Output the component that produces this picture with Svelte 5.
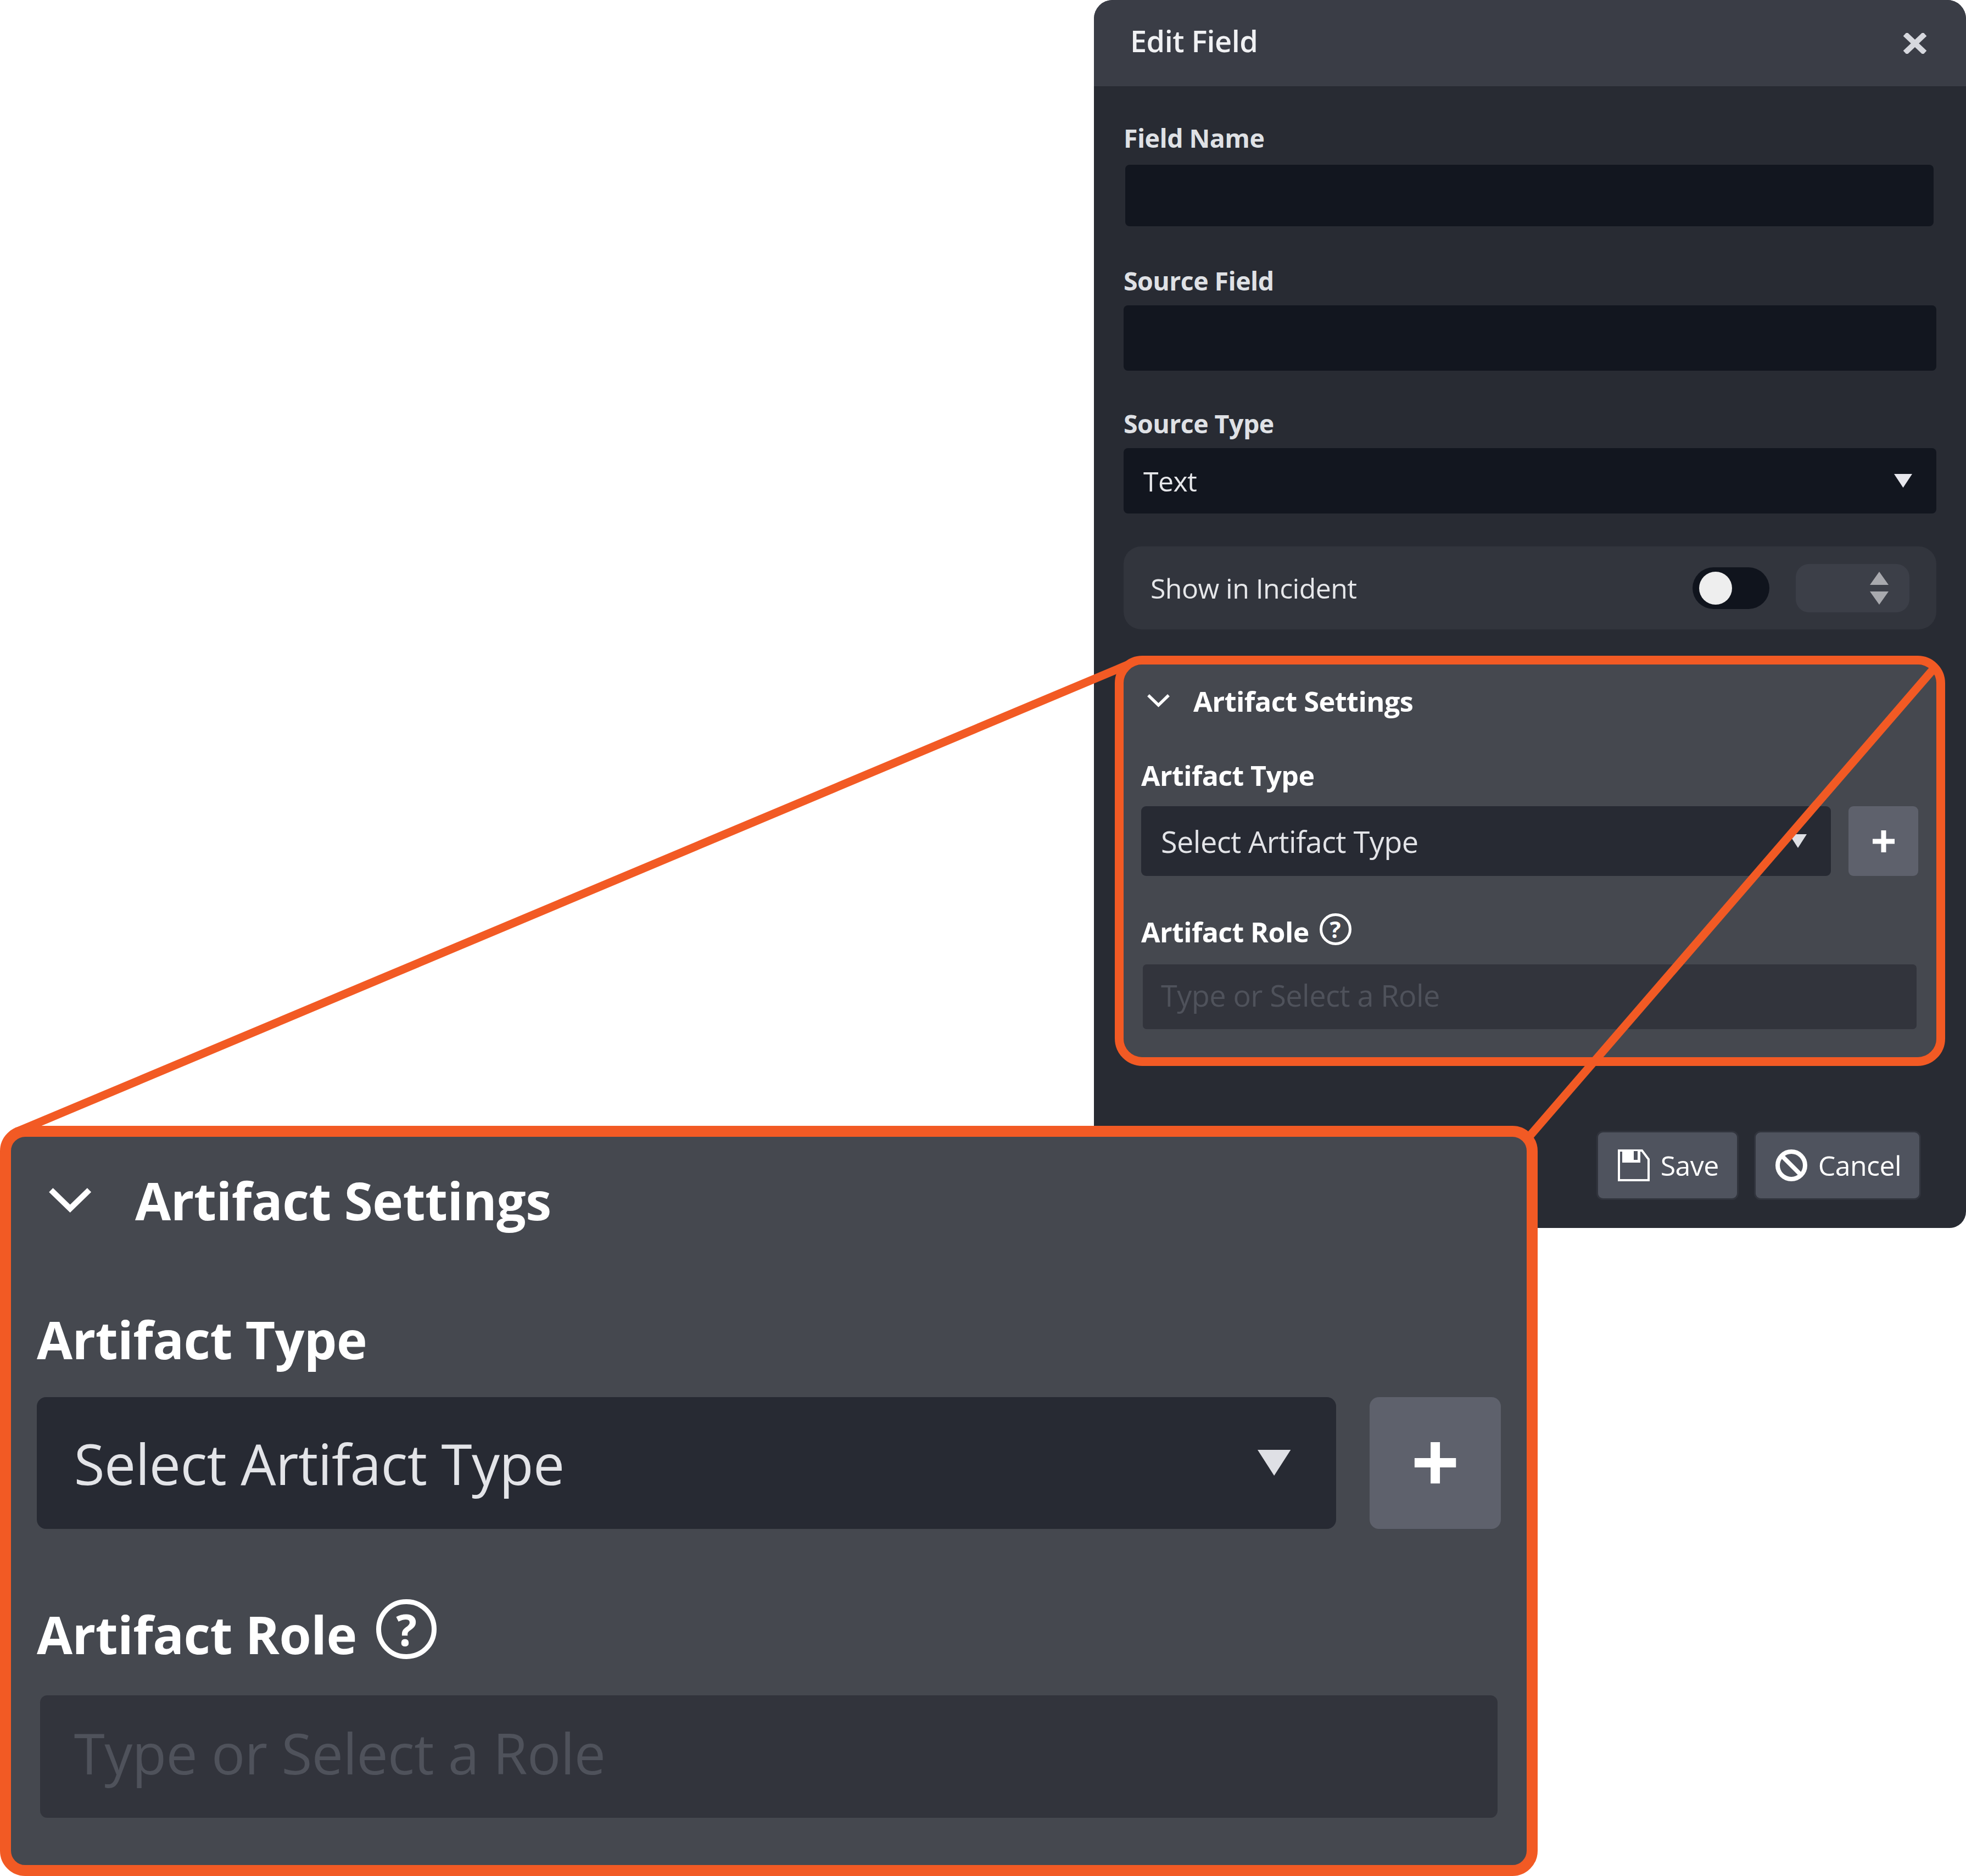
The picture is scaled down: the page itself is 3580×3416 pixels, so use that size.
<script>
  const fields = [
    { label: "Field Name", inset: true },
    { label: "Source Field", inset: false },
  ];
</script>

{#snippet artifact(cls)}
  <section class="artifact {cls}">
    <div class="artifact-head">
      <svg class="chevron" viewBox="0 0 41 24" fill="none" stroke="currentColor" stroke-width="5.5" stroke-linecap="square">
        <path d="M4 4 L20.5 20 L37 4" />
      </svg>
      <span>Artifact Settings</span>
    </div>
    <div class="a-label first">Artifact Type</div>
    <div class="type-row">
      <div class="a-select">
        <span>Select Artifact Type</span>
        <svg class="a-caret" viewBox="0 0 32 25"><path d="M0 0 H32 L16 25 Z" fill="#dfe0e5" /></svg>
      </div>
      <button class="plus" aria-label="Add">
        <svg viewBox="0 0 42 42"><path d="M21 1 V41 M1 21 H41" stroke="#fff" stroke-width="9" fill="none" /></svg>
      </button>
    </div>
    <div class="a-label second">Artifact Role <span class="help">?</span></div>
    <input class="a-input" placeholder="Type or Select a Role" />
  </section>
{/snippet}

<div class="page">
  <div class="panel">
    <header class="head">
      <span>Edit Field</span>
      <svg class="close" viewBox="0 0 42 38" fill="none" stroke="#d6d8de" stroke-width="10">
        <path d="M3 2 L39 36 M39 2 L3 36" />
      </svg>
    </header>

    <div class="body">
      {#each fields as f}
        <div class="field">
          <div class="label">{f.label}</div>
          <input class="control" class:inset={f.inset} />
        </div>
      {/each}

      <div class="field last">
        <div class="label">Source Type</div>
        <div class="control select">
          <span>Text</span>
          <svg class="caret" viewBox="0 0 33 25"><path d="M0 0 H33 L16.5 25 Z" fill="#e8e8ee" /></svg>
        </div>
      </div>

      <div class="incident">
        <span>Show in Incident</span>
        <div class="toggle"><i></i></div>
        <div class="stepper">
          <svg viewBox="0 0 34 60" width="34" height="60">
            <path d="M17 0 L34 24 H0 Z M17 60 L34 36 H0 Z" fill="#a8a9ae" />
          </svg>
        </div>
      </div>

      {@render artifact("small")}

      <div class="actions">
        <button class="btn">
          <svg viewBox="0 0 58 58" fill="none" stroke="#fff" stroke-width="4">
            <path d="M2 2 H44 L56 18 V56 H2 Z" />
            <path d="M8 2 H41 V24 H8 Z" fill="#fff" stroke="none" />
            <path d="M29 3 H36 V19 H29 Z" fill="#4f535e" stroke="none" />
          </svg>
          Save
        </button>
        <button class="btn">
          <svg viewBox="0 0 58 58" fill="none" stroke="#fff" stroke-width="8">
            <circle cx="29" cy="29" r="25" />
            <path d="M12 12 L46 46" />
          </svg>
          Cancel
        </button>
      </div>
    </div>
  </div>

  <svg class="connectors" viewBox="0 0 3580 3416" fill="none" stroke="#f25a24" stroke-width="15">
    <path d="M2055 1210 L30 2061" />
    <path d="M3520 1219 L2786 2068" />
  </svg>

  {@render artifact("large")}
</div>

<style>
  :global(body) {
    background: #fff;
  }
  * {
    box-sizing: border-box;
  }
  .page {
    position: relative;
    width: 3580px;
    height: 3416px;
    display: flex;
    justify-content: flex-end;
    align-items: flex-start;
    overflow: hidden;
    font-family: "Open Sans", "Noto Sans", sans-serif;
    letter-spacing: -0.035em;
    color: #e6e7ea;
  }
  .panel {
    width: 1588px;
    height: 2236px;
    background: #282b33;
    border-radius: 34px 34px 30px 30px;
    overflow: hidden;
  }
  .head {
    height: 157px;
    background: #3a3d46;
    padding: 0 72px 10px 66px;
    display: flex;
    align-items: center;
    justify-content: space-between;
    font-size: 54px;
    font-weight: 600;
    color: #f0f1f3;
  }
  .close {
    width: 42px;
    height: 38px;
    margin-top: 11px;
  }
  .body {
    padding: 64px 54px 0;
  }
  .field {
    display: flex;
    flex-direction: column;
    margin-bottom: 66px;
  }
  .field.last {
    margin-bottom: 60px;
  }
  .label {
    font-size: 46.5px;
    line-height: 60px;
    font-weight: 700;
    color: #dfe1e5;
    margin-bottom: 15px;
  }
  .control {
    display: block;
    width: 100%;
    height: 119px;
    background: #12161f;
    border: none;
    border-radius: 8px;
  }
  .inset {
    width: auto;
    height: 112px;
    margin: 4px 5px 3px 3px;
  }
  .select {
    display: flex;
    align-items: center;
    justify-content: space-between;
    padding: 0 44px 0 36px;
    font-size: 50px;
    color: #e6e7ea;
  }
  .caret {
    width: 33px;
    height: 25px;
  }
  .incident {
    height: 151px;
    background: #32353d;
    border-radius: 32px;
    padding: 0 49px;
    display: flex;
    align-items: center;
    font-size: 50px;
    color: #e6e7ea;
  }
  .incident > span {
    flex: 1;
  }
  .toggle {
    width: 140px;
    height: 76px;
    border-radius: 38px;
    background: #10141d;
    padding: 8px 12px;
    margin-right: 48px;
  }
  .toggle i {
    display: block;
    width: 60px;
    height: 60px;
    border-radius: 50%;
    background: #eeeeee;
  }
  .stepper {
    width: 207px;
    height: 88px;
    border-radius: 24px;
    background: #3c3f48;
    display: flex;
    align-items: center;
    justify-content: flex-end;
    padding-right: 38px;
  }

  /* shared by the section in the form and its enlarged copy */
  .artifact {
    background: #45484f;
    color: #fff;
    padding: var(--pt) var(--pr) var(--pb) var(--pl);
  }
  .small {
    --k: 1;
    --pt: 36px;
    --pr: 33px;
    --pb: 51px;
    --pl: 32px;
    --chev: 11px;
    --head: 50.5px;
    --fix: -1px;
    margin-top: 64px;
    border-radius: 34px;
    outline: 16px solid #f25a24;
    position: relative;
  }
  .large {
    --k: 1.885;
    --pt: 59px;
    --pr: 47px;
    --pb: 0px;
    --pl: 47px;
    --chev: 22px;
    --head: 94.5px;
    --fix: -5px;
    position: absolute;
    left: 0;
    top: 2050px;
    width: 2800px;
    height: 1366px;
    border: 20px solid #f25a24;
    border-radius: 46px;
  }
  .artifact-head {
    display: flex;
    align-items: center;
    height: calc(60px * var(--k));
    font-size: var(--head);
    font-weight: 700;
  }
  .chevron {
    width: calc(41px * var(--k));
    height: calc(24px * var(--k));
    margin-left: var(--chev);
    margin-right: calc(95px * var(--k) - 41px * var(--k) - var(--chev));
  }
  .a-label {
    font-size: calc(50px * var(--k));
    line-height: calc(60px * var(--k));
    font-weight: 700;
    display: flex;
    align-items: center;
  }
  .first {
    margin-top: calc(77px * var(--k) + var(--fix));
    margin-bottom: calc(26px * var(--k));
  }
  .second {
    margin-top: calc(72px * var(--k));
    margin-bottom: calc(29px * var(--k));
  }
  .type-row {
    display: flex;
    gap: calc(32px * var(--k));
    height: calc(127px * var(--k));
  }
  .a-select {
    flex: 1;
    display: flex;
    align-items: center;
    justify-content: space-between;
    background: #272a33;
    border-radius: calc(9px * var(--k));
    padding: 0 calc(44px * var(--k)) 0 calc(36px * var(--k));
    font-size: calc(54px * var(--k));
    color: #e3e4e8;
  }
  .a-caret {
    width: calc(32px * var(--k));
    height: calc(25px * var(--k));
  }
  .plus {
    width: calc(127px * var(--k));
    background: #5e616c;
    border: none;
    border-radius: calc(9px * var(--k));
    padding: 0;
    display: flex;
    align-items: center;
    justify-content: center;
  }
  .plus svg {
    width: calc(42px * var(--k));
    height: calc(42px * var(--k));
  }
  .help {
    width: calc(58px * var(--k));
    height: calc(58px * var(--k));
    margin-left: calc(19px * var(--k));
    margin-top: calc(-10px * var(--k));
    border: calc(5px * var(--k)) solid #fff;
    border-radius: 50%;
    display: flex;
    align-items: center;
    justify-content: center;
    font-size: calc(42px * var(--k));
    font-weight: 700;
    letter-spacing: 0;
  }
  .a-input {
    display: block;
    width: calc(100% - 6px * var(--k));
    height: calc(118px * var(--k));
    margin: 0 calc(3px * var(--k));
    background: #32343c;
    border: none;
    border-radius: calc(7px * var(--k));
    padding: 0 calc(33px * var(--k)) calc(7px * var(--k));
    font-family: inherit;
    letter-spacing: inherit;
    font-size: calc(54px * var(--k));
  }
  .a-input::placeholder {
    color: #4f525b;
    opacity: 1;
  }

  .actions {
    display: flex;
    justify-content: flex-end;
    gap: 34px;
    margin-top: 137px;
    padding-right: 31px;
  }
  .btn {
    height: 120px;
    background: #4f535e;
    border: none;
    box-shadow: 0 0 0 3px #31343d;
    border-radius: 9px;
    padding: 0 33px 0 36px;
    display: flex;
    align-items: center;
    gap: 20px;
    font-family: inherit;
    letter-spacing: inherit;
    font-size: 50px;
    color: #fff;
  }
  .btn svg {
    width: 58px;
    height: 58px;
  }
  .connectors {
    position: absolute;
    inset: 0;
    width: 3580px;
    height: 3416px;
    pointer-events: none;
  }
</style>
